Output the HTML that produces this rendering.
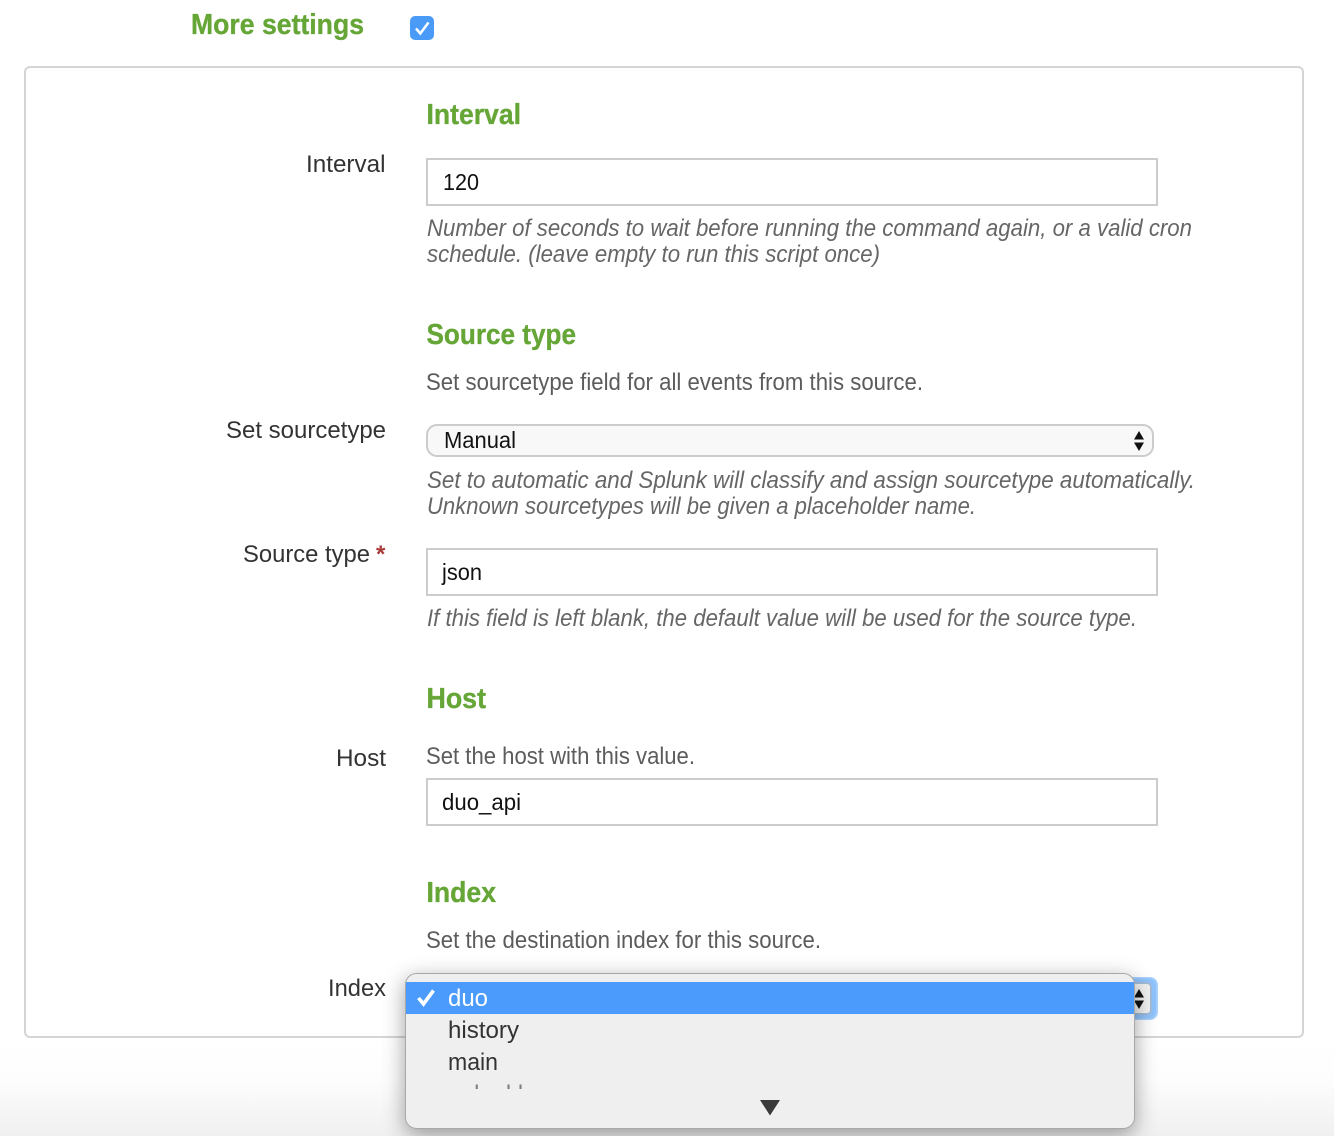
<!DOCTYPE html>
<html><head><meta charset="utf-8">
<style>
html,body{margin:0;padding:0;background:#fff}
body{width:1334px;height:1136px;overflow:hidden;position:relative}
svg{position:absolute;left:0;top:0}
text{font-family:"Liberation Sans",sans-serif;white-space:pre}
.h{font-weight:700;font-size:29px;fill:#65a637;stroke:#65a637;stroke-width:.35px}
.l{font-size:24px;fill:#333}
.d{font-size:24px;fill:#5c5c5c}
.i{font-size:24px;font-style:italic;fill:#666}
.v{font-size:23px;fill:#111}
.m{font-size:24px;fill:#333}
</style></head>
<body>
<svg width="1334" height="1136" viewBox="0 0 1334 1136" xmlns="http://www.w3.org/2000/svg">
<defs>
<linearGradient id="bg" x1="0" y1="0" x2="0" y2="1"><stop offset="0" stop-color="#fff"/><stop offset=".42" stop-color="#fdfdfd"/><stop offset="1" stop-color="#f0f0f0"/></linearGradient>
<filter id="sh" x="-10%" y="-30%" width="120%" height="170%"><feDropShadow dx="0" dy="6" stdDeviation="11" flood-color="#000" flood-opacity=".38"/></filter>
<clipPath id="cl"><rect x="406" y="974" width="728" height="115"/></clipPath>
</defs>
<rect x="0" y="1040" width="1334" height="96" fill="url(#bg)"/>
<rect x="25" y="67" width="1278" height="970" rx="5" fill="#fff" stroke="#d5d5d5" stroke-width="2"/>

<text class="h" x="191" y="34" textLength="173" lengthAdjust="spacingAndGlyphs">More settings</text>
<rect x="410" y="16" width="24" height="24" rx="5" fill="#4a9bf8"/>
<path d="M416 28.500 L420.300 33.500 L428.500 22.500" fill="none" stroke="#fff" stroke-width="2.500"/>

<text class="h" x="426.500" y="124" textLength="94.500" lengthAdjust="spacingAndGlyphs">Interval</text>
<text class="l" x="306" y="172" textLength="79.500" lengthAdjust="spacingAndGlyphs">Interval</text>
<rect x="427" y="159" width="730" height="46" fill="#fff" stroke="#ccc" stroke-width="2"/>
<text class="v" x="443" y="190" textLength="36" lengthAdjust="spacingAndGlyphs">120</text>
<text class="i" x="427" y="236" textLength="765" lengthAdjust="spacingAndGlyphs">Number of seconds to wait before running the command again, or a valid cron</text>
<text class="i" x="427" y="262" textLength="453" lengthAdjust="spacingAndGlyphs">schedule. (leave empty to run this script once)</text>

<text class="h" x="426.500" y="344" textLength="149.500" lengthAdjust="spacingAndGlyphs">Source type</text>
<text class="d" x="426" y="390" textLength="497" lengthAdjust="spacingAndGlyphs">Set sourcetype field for all events from this source.</text>
<text class="l" x="226" y="438" textLength="160" lengthAdjust="spacingAndGlyphs">Set sourcetype</text>
<rect x="427" y="425" width="726" height="31" rx="10" fill="#f8f8f8" stroke="#ccc" stroke-width="2"/>
<text class="v" x="444" y="448" textLength="72" lengthAdjust="spacingAndGlyphs">Manual</text>
<path d="M1134 439.500 L1139 431 L1144 439.500 Z M1134 442.500 L1144 442.500 L1139 451 Z" fill="#111"/>
<text class="i" x="427" y="488" textLength="768" lengthAdjust="spacingAndGlyphs">Set to automatic and Splunk will classify and assign sourcetype automatically.</text>
<text class="i" x="427" y="514" textLength="549" lengthAdjust="spacingAndGlyphs">Unknown sourcetypes will be given a placeholder name.</text>

<text class="l" x="243" y="562" textLength="127" lengthAdjust="spacingAndGlyphs">Source type</text>
<text x="376" y="562" style="font-size:24px;font-weight:700;fill:#a83a3a">*</text>
<rect x="427" y="549" width="730" height="46" fill="#fff" stroke="#ccc" stroke-width="2"/>
<text class="v" x="442" y="580" textLength="40" lengthAdjust="spacingAndGlyphs">json</text>
<text class="i" x="427" y="626" textLength="710" lengthAdjust="spacingAndGlyphs">If this field is left blank, the default value will be used for the source type.</text>

<text class="h" x="426.500" y="708" textLength="59.500" lengthAdjust="spacingAndGlyphs">Host</text>
<text class="l" x="336" y="766" textLength="50" lengthAdjust="spacingAndGlyphs">Host</text>
<text class="d" x="426" y="764" textLength="269" lengthAdjust="spacingAndGlyphs">Set the host with this value.</text>
<rect x="427" y="779" width="730" height="46" fill="#fff" stroke="#ccc" stroke-width="2"/>
<text class="v" x="442" y="810" textLength="79" lengthAdjust="spacingAndGlyphs">duo_api</text>

<text class="h" x="426.500" y="902" textLength="69.500" lengthAdjust="spacingAndGlyphs">Index</text>
<text class="d" x="426" y="948" textLength="395" lengthAdjust="spacingAndGlyphs">Set the destination index for this source.</text>
<text class="l" x="328" y="996" textLength="58" lengthAdjust="spacingAndGlyphs">Index</text>

<rect x="1100" y="977" width="58" height="43" rx="8" fill="#a9d0fc"/>
<rect x="1100" y="978.500" width="56" height="40" rx="7" fill="#8fc2fb"/>
<rect x="1100" y="983" width="51" height="31" rx="4" fill="#f2f2f2" stroke="#a3bcd8" stroke-width="2"/>
<path d="M1134 997.500 L1139 989 L1144 997.500 Z M1134 1000.500 L1144 1000.500 L1139 1009 Z" fill="#111"/>

<rect x="405.500" y="973.500" width="729" height="155" rx="11" fill="#efefef" stroke="#a8a8a8" filter="url(#sh)"/>
<rect x="406" y="982" width="728" height="32" fill="#4a9bfc"/>
<path d="M418.500 998 L423.500 1004 L433.500 990.500" fill="none" stroke="#fff" stroke-width="3.600"/>
<text class="m" x="448" y="1006" style="fill:#fff" textLength="40" lengthAdjust="spacingAndGlyphs">duo</text>
<text class="m" x="448" y="1038" textLength="71" lengthAdjust="spacingAndGlyphs">history</text>
<text class="m" x="448" y="1070" textLength="50" lengthAdjust="spacingAndGlyphs">main</text>
<g clip-path="url(#cl)" opacity=".6"><text class="m" x="449" y="1102" textLength="135" lengthAdjust="spacingAndGlyphs">splunklogger</text></g>
<path d="M760 1100 L780 1100 L770 1115.500 Z" fill="#3a3a3a"/>
</svg>
</body></html>
